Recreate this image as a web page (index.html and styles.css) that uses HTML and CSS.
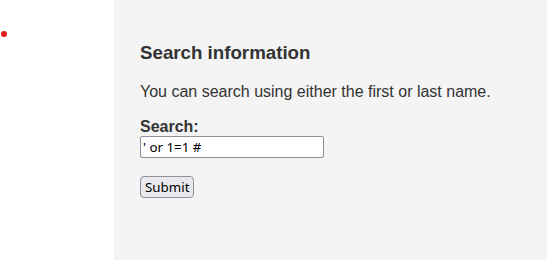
FILE: index.html
```html
<!DOCTYPE html>
<html>
<head>
  <title>Search information</title>
  <link rel="stylesheet" href="styles.css">
</head>
<body>
  <div class="container">
    <div class="left-sidebar">
      <ul class="menu">
        <li class="menu-item"></li>
      </ul>
    </div>
    <div class="main-panel">
      <h3 class="title">Search information</h3>
      <p class="info">You can search using either the first or last name.</p>
      <form class="search-form" onsubmit="return false;">
        <label class="search-label" for="search">Search:</label>
        <input class="search-input" type="text" id="search" name="search" value="' or 1=1 #">
        <div class="form-actions">
          <input class="submit-btn" type="submit" value="Submit">
        </div>
      </form>
    </div>
  </div>
</body>
</html>
```

FILE: styles.css
```css
body {
  margin: 0;
  background: #fff;
  color: #333;
  font-family: "Liberation Sans", Arial, sans-serif;
}
.container {
  display: flex;
  width: 547px;
  height: 260px;
}

.left-sidebar {
  width: 114px;
  flex-shrink: 0;
}
.menu {
  margin: 0;
  padding: 31px 0 0 1px;
  list-style: none;
}
.menu-item {
  width: 6px;
  height: 6px;
  border-radius: 50%;
  background: #e21b1b;
}

.main-panel {
  flex-grow: 1;
  background: #f4f4f4;
  padding: 0 0 0 26px;
}
.title {
  margin: 42px 0 0;
  font-size: 18.72px;
  line-height: 22px;
}
.info {
  margin: 18px 0 0;
  font-size: 16px;
  line-height: 20px;
}
.search-form {
  margin-top: 16px;
  display: flex;
  flex-direction: column;
  align-items: flex-start;
}
.search-label {
  font-weight: bold;
  font-size: 16px;
  line-height: 18px;
}
.search-input {
  width: 184px;
  height: 22px;
  box-sizing: border-box;
  margin: 0;
  padding: 1px 2px;
  border: 1px solid #8f8f9d;
  border-radius: 2px;
  background: #fff;
  color: #000;
  font-family: "Noto Sans", sans-serif;
  font-size: 13.33px;
}
.form-actions {
  margin-top: 18px;
}
.submit-btn {
  margin: 0;
  height: 22px;
  padding: 0 4px;
  border: 1px solid #8f8f9d;
  border-radius: 4px;
  background: #e9e9ed;
  color: #000;
  font-family: "Noto Sans", sans-serif;
  font-size: 13.33px;
}
```
